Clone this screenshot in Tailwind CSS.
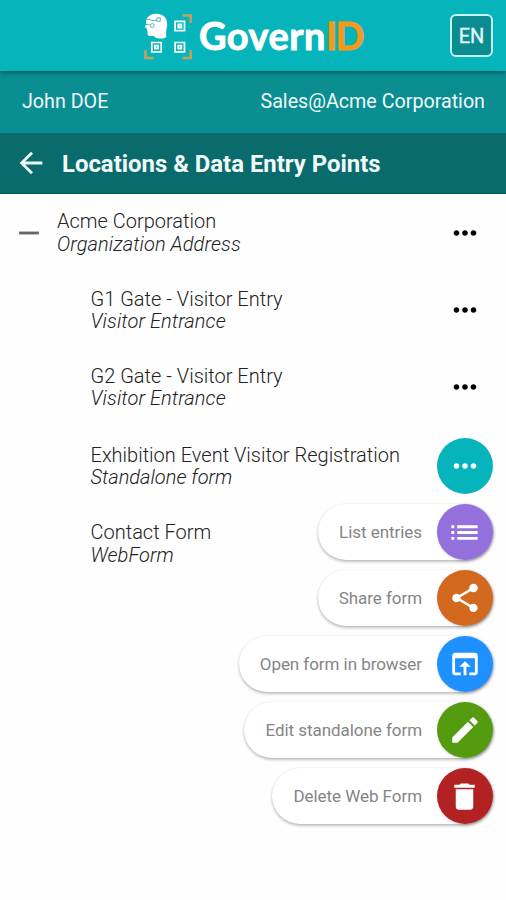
<!DOCTYPE html>
<html lang="en">
<head>
<meta charset="utf-8">
<title>GovernID</title>
<script src="https://cdn.jsdelivr.net/npm/@tailwindcss/browser@4"></script>
</head>
<body class="w-[506px] h-[900px] overflow-hidden bg-[#fefefe] font-[Roboto,sans-serif]">
<svg class="hidden">
  <symbol id="more" viewBox="0 0 24 24"><path d="M6 10c-1.1 0-2 .9-2 2s.9 2 2 2 2-.9 2-2-.9-2-2-2zm12 0c-1.1 0-2 .9-2 2s.9 2 2 2 2-.9 2-2-.9-2-2-2zm-6 0c-1.1 0-2 .9-2 2s.9 2 2 2 2-.9 2-2-.9-2-2-2z"/></symbol>
</svg>
<header class="relative z-10 flex h-[71px] items-center bg-[#05b5bb] shadow-[0_2px_4px_rgba(0,0,0,0.35)]">
  <svg class="ml-[143px] h-[50px] w-[50px]" viewBox="143 10 50 50" fill="none">
    <path fill="#fff" d="M146 20c.8-4.500 5-7.200 10.500-7.200 6.500 0 10.700 4.200 10.700 10 0 3.500-1 5-1 7.500v6c-3.500 1.900-8.500 1.500-11.500-.3l-.8-1h-4c-1.800 0-2.400-1-2.400-2.500v-2l-.8-3-1.900-1.500 1.500-3z"/>
    <path stroke="#3fb9bd" stroke-width=".9" d="M145 18.300l5 .2 2 1h4.500m-10.500 4l3.800.3m7-7h3.500v3.500h-3.500z"/>
    <circle cx="152.300" cy="24.500" r="2" stroke="#3fb9bd" stroke-width=".9"/>
    <g stroke="#fff" stroke-width="1.700"><path d="M175.100 20.300h9.400v9.400h-9.400zM151.800 41.500h9.400v9.400h-9.400zM175.100 41.500h9.400v9.400h-9.400z"/></g>
    <g stroke="#fff" stroke-width="1.800"><path d="M178.300 23.500h3v3h-3zM155 44.700h3v3h-3zM178.300 44.700h3v3h-3z"/></g>
    <path stroke="#c5a05c" stroke-width="2.500" d="M182.500 14.500h8.200V22M145.500 49v8h8M190.700 49v8h-8.200"/>
  </svg>
  <div class="ml-[6px] flex h-[52px] w-[170px] whitespace-nowrap pb-[2px] font-[Lato,sans-serif] text-[38px] font-bold leading-[50px] tracking-[0.500px] text-white [-webkit-text-stroke:0.9px_currentColor] [stroke-linejoin:round]">Govern<span class="tracking-[-1.800px] text-[#f5991d]">ID</span></div>
  <div class="ml-auto mr-[13px] flex h-[43px] w-[43px] items-center justify-center rounded-[6px] border-2 border-[#c3f4f4] bg-[#0a8c90] text-[20px] text-[#e5fbfb] [-webkit-text-stroke:0.3px_currentColor]">EN</div>
</header>
<div class="flex h-[62px] items-center justify-between bg-[#0b8e91] pl-[22px] pr-[21px] text-[19.700px] text-[#effafa]">
  <span>John DOE</span><span>Sales@Acme Corporation</span>
</div>
<div class="flex h-[61px] items-center border-b border-[#075759] bg-[#0a6b6d] pl-[14px] text-[#f1f9f9]">
  <svg class="h-[34px] w-[34px]" viewBox="0 0 24 24" fill="currentColor"><path d="M20 11H7.830l5.590-5.590L12 4l-8 8 8 8 1.410-1.410L7.830 13H20v-2z"/></svg>
  <h1 class="ml-[14px] pt-[3px] text-[23.900px] font-bold">Locations &amp; Data Entry Points</h1>
</div>
<main class="relative text-[20px] font-light leading-[22.500px] text-[#222]">
  <div class="flex h-[77.400px] items-center pl-[12px] pr-[24px]">
    <svg class="mr-[11px] h-[34px] w-[34px] fill-[#666]" viewBox="0 0 24 24"><path d="M19 13H5v-2h14v2z"/></svg>
    <div class="flex-1"><p>Acme Corporation</p><p class="italic tracking-[0.08px]">Organization Address</p></div>
    <svg class="h-[34px] w-[34px] fill-black"><use href="#more"/></svg>
  </div>
  <div class="flex h-[77.400px] items-center pl-[90.500px] pr-[24px]">
    <div class="flex-1"><p>G1 Gate - Visitor Entry</p><p class="italic tracking-[0.08px]">Visitor Entrance</p></div>
    <svg class="h-[34px] w-[34px] fill-black"><use href="#more"/></svg>
  </div>
  <div class="flex h-[77.400px] items-center pl-[90.500px] pr-[24px]">
    <div class="flex-1"><p>G2 Gate - Visitor Entry</p><p class="italic tracking-[0.08px]">Visitor Entrance</p></div>
    <svg class="h-[34px] w-[34px] fill-black"><use href="#more"/></svg>
  </div>
  <div class="flex h-[79px] items-center pl-[90.500px] pr-[13.500px]">
    <div class="flex-1 pt-[1px]"><p>Exhibition Event Visitor Registration</p><p class="italic">Standalone form</p></div>
    <div class="flex h-[56px] w-[56px] items-center justify-center rounded-full bg-[#05b5bb]"><svg class="h-[34px] w-[34px] fill-white"><use href="#more"/></svg></div>
  </div>
  <div class="flex h-[77.400px] items-center pl-[90.500px]">
    <div><p>Contact Form</p><p class="italic">WebForm</p></div>
  </div>
  <div class="absolute right-[13.500px] top-[310px] flex flex-col items-end gap-[10px] text-[17px] font-normal tracking-[-0.05px] text-[#858585]">
    <div class="flex h-[56px] items-center gap-[14.500px] rounded-full bg-white pl-[21px] shadow-[0_2px_3px_rgba(0,0,0,0.24),0_0_2px_rgba(0,0,0,0.1)]">
      <span>List entries</span>
      <div class="flex h-[56px] w-[56px] items-center justify-center rounded-full bg-[#9370db] shadow-[1px_1px_3px_rgba(0,0,0,0.25)]"><svg class="h-[35px] w-[35px] fill-white" viewBox="0 0 24 24"><path d="M3 13h2v-2H3v2zm0 4h2v-2H3v2zm0-8h2V7H3v2zm4 4h14v-2H7v2zm0 4h14v-2H7v2zM7 7v2h14V7H7z"/></svg></div>
    </div>
    <div class="flex h-[56px] items-center gap-[14.500px] rounded-full bg-white pl-[21px] shadow-[0_2px_3px_rgba(0,0,0,0.24),0_0_2px_rgba(0,0,0,0.1)]">
      <span>Share form</span>
      <div class="flex h-[56px] w-[56px] items-center justify-center rounded-full bg-[#d2691e] shadow-[1px_1px_3px_rgba(0,0,0,0.25)]"><svg class="h-[34px] w-[34px] fill-white" viewBox="0 0 24 24"><path d="M18 16.080c-.76 0-1.440.3-1.960.77L8.910 12.700c.05-.23.09-.46.09-.7s-.04-.47-.09-.7l7.050-4.110c.54.5 1.250.81 2.040.81 1.660 0 3-1.340 3-3s-1.340-3-3-3-3 1.340-3 3c0 .24.04.47.09.7L8.040 9.810C7.500 9.310 6.790 9 6 9c-1.660 0-3 1.340-3 3s1.340 3 3 3c.79 0 1.500-.31 2.040-.81l7.120 4.160c-.05.21-.08.43-.08.65 0 1.610 1.310 2.920 2.920 2.920s2.920-1.310 2.920-2.920-1.310-2.920-2.920-2.920z"/></svg></div>
    </div>
    <div class="flex h-[56px] items-center gap-[14.500px] rounded-full bg-white pl-[21px] shadow-[0_2px_3px_rgba(0,0,0,0.24),0_0_2px_rgba(0,0,0,0.1)]">
      <span>Open form in browser</span>
      <div class="flex h-[56px] w-[56px] items-center justify-center rounded-full bg-[#1e90ff] shadow-[1px_1px_3px_rgba(0,0,0,0.25)]"><svg class="h-[34px] w-[34px] fill-white" viewBox="0 0 24 24"><path d="M19 4H5c-1.110 0-2 .9-2 2v12c0 1.100.89 2 2 2h4v-2H5V8h14v10h-4v2h4c1.100 0 2-.9 2-2V6c0-1.100-.89-2-2-2zm-7 6-4 4h3v6h2v-6h3l-4-4z"/></svg></div>
    </div>
    <div class="flex h-[56px] items-center gap-[14.500px] rounded-full bg-white pl-[21px] shadow-[0_2px_3px_rgba(0,0,0,0.24),0_0_2px_rgba(0,0,0,0.1)]">
      <span>Edit standalone form</span>
      <div class="flex h-[56px] w-[56px] items-center justify-center rounded-full bg-[#559b10] shadow-[1px_1px_3px_rgba(0,0,0,0.25)]"><svg class="h-[34px] w-[34px] fill-white" viewBox="0 0 24 24"><path d="M3 17.250V21h3.750L17.810 9.940l-3.750-3.750L3 17.250zM20.710 7.040c.39-.39.39-1.020 0-1.410l-2.340-2.340c-.39-.39-1.020-.39-1.410 0l-1.830 1.830 3.750 3.750 1.830-1.830z"/></svg></div>
    </div>
    <div class="flex h-[56px] items-center gap-[14.500px] rounded-full bg-white pl-[21px] shadow-[0_2px_3px_rgba(0,0,0,0.24),0_0_2px_rgba(0,0,0,0.1)]">
      <span>Delete Web Form</span>
      <div class="flex h-[56px] w-[56px] items-center justify-center rounded-full bg-[#b22222] shadow-[1px_1px_3px_rgba(0,0,0,0.25)]"><svg class="h-[35px] w-[35px] fill-white" viewBox="0 0 24 24"><path d="M6 19c0 1.100.9 2 2 2h8c1.100 0 2-.9 2-2V7H6v12zM19 4h-3.500l-1-1h-5l-1 1H5v2h14V4z"/></svg></div>
    </div>
  </div>
</main>
</body>
</html>
